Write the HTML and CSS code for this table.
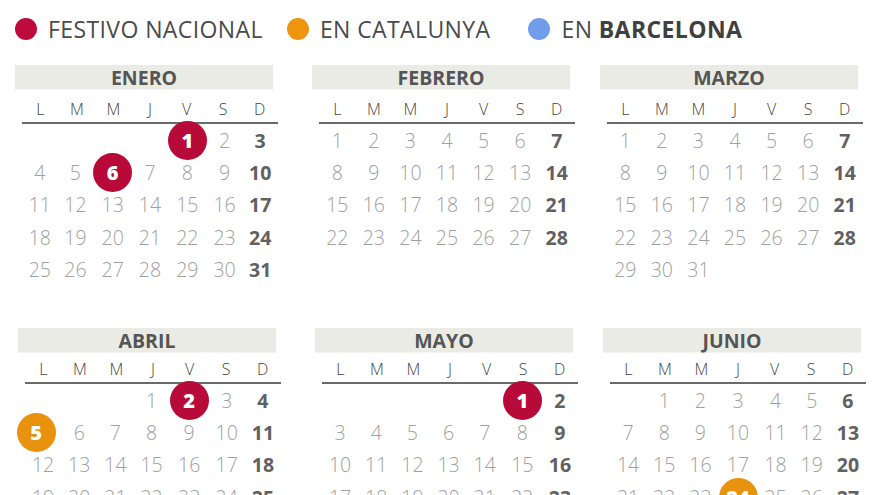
FILE: index.html
```html
<!DOCTYPE html>
<html lang="es">
<head>
<meta charset="utf-8">
<title>Calendario laboral Barcelona 2021</title>
<link rel="stylesheet" href="styles.css">
</head>
<body>
<div class="page">
  <div class="legend">
    <div class="legend-item"><span class="dot dot-red"></span><span>FESTIVO NACIONAL</span></div>
    <div class="legend-item"><span class="dot dot-orange"></span><span>EN CATALUNYA</span></div>
    <div class="legend-item"><span class="dot dot-blue"></span><span>EN <b>BARCELONA</b></span></div>
  </div>
  <div class="months">
    <div class="month">
      <div class="month-title">ENERO</div>
      <div class="weekdays"><span>L</span><span>M</span><span>M</span><span>J</span><span>V</span><span>S</span><span>D</span></div>
      <div class="days">
        <span></span><span></span><span></span><span></span><span class="day"><b class="mark red">1</b></span><span class="day">2</span><span class="day sun">3</span>
        <span class="day">4</span><span class="day">5</span><span class="day"><b class="mark red">6</b></span><span class="day">7</span><span class="day">8</span><span class="day">9</span><span class="day sun">10</span>
        <span class="day">11</span><span class="day">12</span><span class="day">13</span><span class="day">14</span><span class="day">15</span><span class="day">16</span><span class="day sun">17</span>
        <span class="day">18</span><span class="day">19</span><span class="day">20</span><span class="day">21</span><span class="day">22</span><span class="day">23</span><span class="day sun">24</span>
        <span class="day">25</span><span class="day">26</span><span class="day">27</span><span class="day">28</span><span class="day">29</span><span class="day">30</span><span class="day sun">31</span>
      </div>
    </div>
    <div class="month">
      <div class="month-title">FEBRERO</div>
      <div class="weekdays"><span>L</span><span>M</span><span>M</span><span>J</span><span>V</span><span>S</span><span>D</span></div>
      <div class="days">
        <span class="day">1</span><span class="day">2</span><span class="day">3</span><span class="day">4</span><span class="day">5</span><span class="day">6</span><span class="day sun">7</span>
        <span class="day">8</span><span class="day">9</span><span class="day">10</span><span class="day">11</span><span class="day">12</span><span class="day">13</span><span class="day sun">14</span>
        <span class="day">15</span><span class="day">16</span><span class="day">17</span><span class="day">18</span><span class="day">19</span><span class="day">20</span><span class="day sun">21</span>
        <span class="day">22</span><span class="day">23</span><span class="day">24</span><span class="day">25</span><span class="day">26</span><span class="day">27</span><span class="day sun">28</span>
      </div>
    </div>
    <div class="month">
      <div class="month-title">MARZO</div>
      <div class="weekdays"><span>L</span><span>M</span><span>M</span><span>J</span><span>V</span><span>S</span><span>D</span></div>
      <div class="days">
        <span class="day">1</span><span class="day">2</span><span class="day">3</span><span class="day">4</span><span class="day">5</span><span class="day">6</span><span class="day sun">7</span>
        <span class="day">8</span><span class="day">9</span><span class="day">10</span><span class="day">11</span><span class="day">12</span><span class="day">13</span><span class="day sun">14</span>
        <span class="day">15</span><span class="day">16</span><span class="day">17</span><span class="day">18</span><span class="day">19</span><span class="day">20</span><span class="day sun">21</span>
        <span class="day">22</span><span class="day">23</span><span class="day">24</span><span class="day">25</span><span class="day">26</span><span class="day">27</span><span class="day sun">28</span>
        <span class="day">29</span><span class="day">30</span><span class="day">31</span>
      </div>
    </div>
    <div class="month month-low">
      <div class="month-title">ABRIL</div>
      <div class="weekdays"><span>L</span><span>M</span><span>M</span><span>J</span><span>V</span><span>S</span><span>D</span></div>
      <div class="days">
        <span></span><span></span><span></span><span class="day">1</span><span class="day"><b class="mark red">2</b></span><span class="day">3</span><span class="day sun">4</span>
        <span class="day"><b class="mark orange shift-left">5</b></span><span class="day">6</span><span class="day">7</span><span class="day">8</span><span class="day">9</span><span class="day">10</span><span class="day sun">11</span>
        <span class="day">12</span><span class="day">13</span><span class="day">14</span><span class="day">15</span><span class="day">16</span><span class="day">17</span><span class="day sun">18</span>
        <span class="day">19</span><span class="day">20</span><span class="day">21</span><span class="day">22</span><span class="day">23</span><span class="day">24</span><span class="day sun">25</span>
        <span class="day">26</span><span class="day">27</span><span class="day">28</span><span class="day">29</span><span class="day">30</span>
      </div>
    </div>
    <div class="month month-low">
      <div class="month-title">MAYO</div>
      <div class="weekdays"><span>L</span><span>M</span><span>M</span><span>J</span><span>V</span><span>S</span><span>D</span></div>
      <div class="days">
        <span></span><span></span><span></span><span></span><span></span><span class="day"><b class="mark red">1</b></span><span class="day sun">2</span>
        <span class="day">3</span><span class="day">4</span><span class="day">5</span><span class="day">6</span><span class="day">7</span><span class="day">8</span><span class="day sun">9</span>
        <span class="day">10</span><span class="day">11</span><span class="day">12</span><span class="day">13</span><span class="day">14</span><span class="day">15</span><span class="day sun">16</span>
        <span class="day">17</span><span class="day">18</span><span class="day">19</span><span class="day">20</span><span class="day">21</span><span class="day">22</span><span class="day sun">23</span>
        <span class="day">24</span><span class="day">25</span><span class="day">26</span><span class="day">27</span><span class="day">28</span><span class="day">29</span><span class="day sun">30</span>
      </div>
    </div>
    <div class="month month-low">
      <div class="month-title">JUNIO</div>
      <div class="weekdays"><span>L</span><span>M</span><span>M</span><span>J</span><span>V</span><span>S</span><span>D</span></div>
      <div class="days">
        <span></span><span class="day">1</span><span class="day">2</span><span class="day">3</span><span class="day">4</span><span class="day">5</span><span class="day sun">6</span>
        <span class="day">7</span><span class="day">8</span><span class="day">9</span><span class="day">10</span><span class="day">11</span><span class="day">12</span><span class="day sun">13</span>
        <span class="day">14</span><span class="day">15</span><span class="day">16</span><span class="day">17</span><span class="day">18</span><span class="day">19</span><span class="day sun">20</span>
        <span class="day">21</span><span class="day">22</span><span class="day">23</span><span class="day"><b class="mark orange">24</b></span><span class="day">25</span><span class="day">26</span><span class="day sun">27</span>
        <span class="day">28</span><span class="day">29</span><span class="day">30</span>
      </div>
    </div>
  </div>
</div>
</body>
</html>
```

FILE: styles.css
```css
html, body {
  margin: 0;
  padding: 0;
  background: #ffffff;
}
body {
  font-family: "Open Sans", "Noto Sans", sans-serif;
  color: #4a4a4a;
  width: 880px;
  height: 495px;
  overflow: hidden;
}
.page {
  padding: 0 0 0 15px;
}
.legend {
  display: flex;
  align-items: center;
  height: 57px;
  font-size: 23px;
  letter-spacing: 0.4px;
  color: #4a4a4a;
  gap: 24px;
}
.legend-item {
  display: flex;
  align-items: center;
  gap: 11px;
}
.legend-item:last-child {
  margin-left: 14px;
}
.legend-item b {
  font-weight: 700;
  color: #404040;
}
.dot {
  width: 22px;
  height: 22px;
  border-radius: 50%;
  flex: none;
}
.dot-red { background: #be0b3c; }
.dot-orange { background: #ee940f; }
.dot-blue { background: #729ded; }

.months {
  margin-top: 8px;
  display: grid;
  grid-template-columns: 297px 288px 1fr;
  grid-template-rows: 263px 200px;
}
.month-low {
  padding-left: 3px;
}
.month-title {
  width: 258px;
  height: 24px;
  background: #ebebe6;
  border-bottom: 1px solid #f3f3f0;
  text-align: center;
  font-weight: 700;
  font-size: 19.5px;
  line-height: 26px;
  color: #555555;
}
.weekdays {
  margin-left: 7px;
  width: 256px;
  display: grid;
  grid-template-columns: repeat(7, 1fr);
  height: 34px;
  align-items: center;
  border-bottom: 2px solid #6a6a6a;
  font-size: 16px;
  font-weight: 300;
  color: #444444;
  text-align: center;
  box-sizing: border-box;
  padding-top: 6px;
}
.month-low .weekdays {
  height: 31px;
  padding-top: 3px;
}
.days {
  margin-left: 7px;
  width: 256px;
  display: grid;
  grid-template-columns: repeat(7, 1fr);
  grid-auto-rows: 32.4px;
  font-size: 19.5px;
  font-weight: 300;
  color: #a0a0a0;
}
.day {
  display: flex;
  align-items: center;
  justify-content: center;
}
.day.sun {
  font-weight: 700;
  color: #616161;
}
.mark {
  flex: none;
  width: 39px;
  height: 39px;
  border-radius: 50%;
  display: flex;
  align-items: center;
  justify-content: center;
  color: #ffffff;
  font-weight: 800;
  font-size: 20px;
  letter-spacing: 0;
  position: relative;
  z-index: 1;
}
.mark.red { background: #b70a38; }
.mark.orange { background: #e8920d; }
.shift-left { margin-left: -14px; }
```
